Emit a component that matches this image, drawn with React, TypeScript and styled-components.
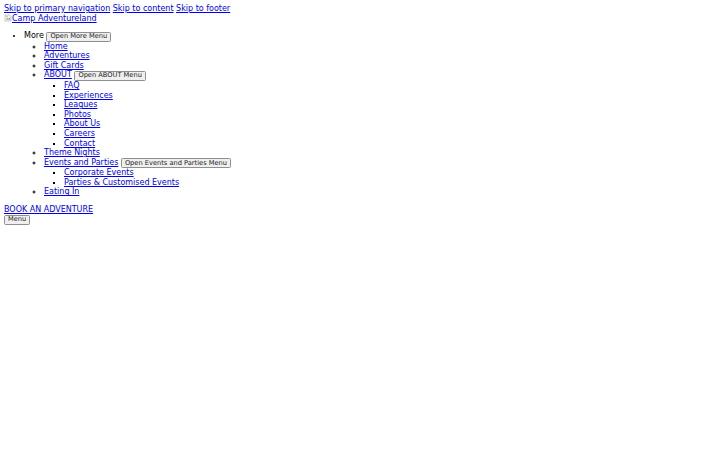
import styled, { createGlobalStyle } from "styled-components";

const GlobalStyle = createGlobalStyle`
  html, body {
    background: #ffffff;
  }
  body {
    margin: 4px;
    font-family: "DejaVu Sans", sans-serif;
    font-size: 8px;
    line-height: 9.6px;
    color: #000000;
  }
`;

const Link = styled.a`
  color: #0000ee;
  text-decoration: underline;
  text-decoration-thickness: 0.5px;
  text-underline-offset: 1px;
`;

const SkipLinks = styled.div``;

const LogoLink = styled(Link)``;

const BrokenImage = styled.svg`
  width: 8px;
  height: 8px;
  vertical-align: -1px;
`;

const NavList = styled.ul<{ $bullet: "disc" | "circle" | "square" }>`
  list-style-type: ${(p) => p.$bullet};
  margin: ${(p) => (p.$bullet === "disc" ? "8px 0" : "0")};
  padding-left: 20px;
`;

const Item = styled.li``;

const ToggleButton = styled.button`
  font-family: "DejaVu Sans", sans-serif;
  font-size: 6.67px;
  font-weight: 400;
  line-height: 7px;
  padding: 0.5px 3px;
  margin: 0;
  border: 1px solid #8f8f8f;
  border-radius: 1.5px;
  background: #efefef;
  color: #1a1a1a;
`;

const MenuButton = styled(ToggleButton)`
  display: block;
`;

type NavItem = { label: string; toggle?: string; children?: NavItem[] };

const menu: NavItem[] = [
  { label: "Home" },
  { label: "Adventures" },
  { label: "Gift Cards" },
  {
    label: "ABOUT",
    toggle: "Open ABOUT Menu",
    children: [
      { label: "FAQ" },
      { label: "Experiences" },
      { label: "Leagues" },
      { label: "Photos" },
      { label: "About Us" },
      { label: "Careers" },
      { label: "Contact" },
    ],
  },
  { label: "Theme Nights" },
  {
    label: "Events and Parties",
    toggle: "Open Events and Parties Menu",
    children: [
      { label: "Corporate Events" },
      { label: "Parties & Customised Events" },
    ],
  },
  { label: "Eating In" },
];

function SubMenu({ items, bullet }: { items: NavItem[]; bullet: "circle" | "square" }) {
  return (
    <NavList $bullet={bullet}>
      {items.map((item) => (
        <Item key={item.label}>
          <Link href="#">{item.label}</Link>{" "}
          {item.toggle && <ToggleButton>{item.toggle}</ToggleButton>}
          {item.children && <SubMenu items={item.children} bullet="square" />}
        </Item>
      ))}
    </NavList>
  );
}

export default function App() {
  return (
    <>
      <GlobalStyle />
      <header>
        <SkipLinks>
          <Link href="#nav">Skip to primary navigation</Link>{" "}
          <Link href="#content">Skip to content</Link>{" "}
          <Link href="#footer">Skip to footer</Link>
        </SkipLinks>
        <LogoLink href="#">
          <BrokenImage viewBox="0 0 16 16">
            <path d="M2 2h9l3 3v9H2z" fill="#f4f4f4" stroke="#9a9a9a" strokeWidth="1" />
            <path d="M4 11l3-3 2 2 2-3 2 4z" fill="#6ca35e" />
            <circle cx="6" cy="5.5" r="1.2" fill="#d9534f" />
          </BrokenImage>
          Camp Adventureland
        </LogoLink>
        <nav>
          <NavList $bullet="disc">
            <Item>
              More <ToggleButton>Open More Menu</ToggleButton>
              <SubMenu items={menu} bullet="circle" />
            </Item>
          </NavList>
        </nav>
        <Link href="#">BOOK AN ADVENTURE</Link>
        <MenuButton>Menu</MenuButton>
      </header>
    </>
  );
}
